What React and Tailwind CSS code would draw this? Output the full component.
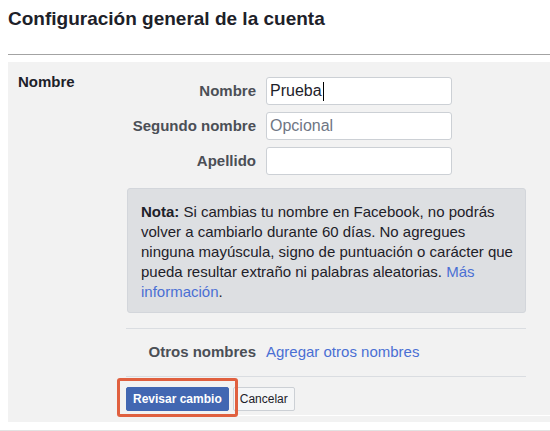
import React from 'react';

const Field = ({ label, children }) => (
  <div className="flex items-center gap-[10px]">
    <label className="w-[130px] text-right text-[15px] font-bold text-[#4b4f56]">{label}</label>
    {children}
  </div>
);

const TextBox = ({ value, placeholder, caret }) => (
  <div className="flex h-[28px] w-[186px] items-center rounded-[3px] border border-[#ccd0d5] bg-white px-[3px] text-[16px]">
    {value ? (
      <span className="text-[#1d2129]">{value}</span>
    ) : (
      <span className="text-[#6f7684]">{placeholder}</span>
    )}
    {caret && <span className="ml-px inline-block h-[19px] w-px bg-black" />}
  </div>
);

export default function App() {
  return (
    <div className="h-[431px] w-[550px] overflow-hidden bg-white font-['Liberation_Sans',Arial,sans-serif]">
      <h2 className="pl-2 pt-[8px] text-[19px] font-bold leading-[22px] text-[#1d2129]">
        Configuración general de la cuenta
      </h2>
      <div className="ml-2 mt-[24px] h-px bg-[#a3a3a3]" />

      <div className="ml-2 mt-[7px] bg-[#f2f2f2] pb-[6px]">
        <div className="flex">
          <div className="w-[118px] pl-[10px] pt-[11px] text-[15px] font-bold leading-[17px] text-[#1d2129]">
            Nombre
          </div>

          <div className="flex-1 pt-[15px]">
            <div className="flex w-[400px] flex-col gap-[7px]">
              <Field label="Nombre">
                <TextBox value="Prueba" caret />
              </Field>
              <Field label="Segundo nombre">
                <TextBox placeholder="Opcional" />
              </Field>
              <Field label="Apellido">
                <TextBox />
              </Field>
            </div>

            <div className="ml-px mt-[13px] h-[125px] w-[399px] rounded-[3px] border border-[#d3d6db] bg-[#dddfe2] pl-[13px] pt-[13px] text-[15px] leading-[20px] whitespace-nowrap text-[#1d2129]">
              <b>Nota:</b> Si cambias tu nombre en Facebook, no podrás
              <br />
              volver a cambiarlo durante 60 días. No agregues
              <br />
              ninguna mayúscula, signo de puntuación o carácter que
              <br />
              pueda resultar extraño ni palabras aleatorias.{' '}
              <a href="#" className="text-[#4a6fd4]">Más</a>
              <br />
              <a href="#" className="text-[#4a6fd4]">información</a>.
            </div>

            <div className="mt-[15px] w-[400px] border-t border-[#dadde1]" />
            <div className="flex h-[47px] w-[400px] items-center gap-[10px]">
              <span className="w-[130px] text-right text-[15px] font-bold text-[#4b4f56]">Otros nombres</span>
              <a href="#" className="text-[15px] text-[#4a6fd4]">Agregar otros nombres</a>
            </div>
            <div className="w-[400px] border-t border-[#dadde1]" />

            <div className="relative mt-[10px] flex gap-[4px]">
              <button className="h-[24px] rounded-[2px] border border-[#4267b2] bg-[#4267b2] px-[6px] text-[12px] font-bold text-white">
                Revisar cambio
              </button>
              <button className="h-[24px] rounded-[2px] border border-[#ccd0d5] bg-[#f5f6f7] px-[6px] text-[12px] text-[#1d2129]">
                Cancelar
              </button>
              <div className="absolute left-[-9px] top-[-9px] h-[39px] w-[121px] rounded-[3px] border-[3px] border-[#e0603f]" />
            </div>
            <div className="mt-[4px] border-t border-white" />
          </div>
        </div>
      </div>

      <div className="mt-[8px] h-px bg-[#e2e2e2]" />
    </div>
  );
}
